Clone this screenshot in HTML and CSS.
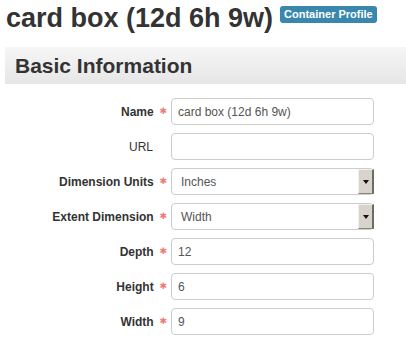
FILE: index.html
```html
<!DOCTYPE html>
<html lang="en">
  <head>
    <meta charset="UTF-8" />
    <meta name="viewport" content="width=device-width, initial-scale=1.0" />
    <title>card box (12d 6h 9w)</title>
    <link rel="stylesheet" href="styles.css">
  </head>
  <body>
    <div class="title-row">
      <h1 class="title">card box (12d 6h 9w)</h1>
      <span class="badge">Container Profile</span>
    </div>
    <div class="section-head">Basic Information</div>
    <form class="fields">
      <label class="field-label required">Name <span class="star">✱</span></label>
      <input class="text-input" type="text" value="card box (12d 6h 9w)" />

      <label class="field-label">URL</label>
      <input class="text-input" type="text" value="" />

      <label class="field-label required">Dimension Units <span class="star">✱</span></label>
      <div class="select-box">
        <span class="select-value">Inches</span>
        <span class="select-arrow"><span class="caret"></span></span>
      </div>

      <label class="field-label required">Extent Dimension <span class="star">✱</span></label>
      <div class="select-box">
        <span class="select-value">Width</span>
        <span class="select-arrow"><span class="caret"></span></span>
      </div>

      <label class="field-label required">Depth <span class="star">✱</span></label>
      <input class="text-input" type="text" value="12" />

      <label class="field-label required">Height <span class="star">✱</span></label>
      <input class="text-input" type="text" value="6" />

      <label class="field-label required">Width <span class="star">✱</span></label>
      <input class="text-input" type="text" value="9" />
    </form>
  </body>
</html>
```

FILE: styles.css
```css
body {
  margin: 0;
  background: #fff;
  color: #333;
  font-family: "Liberation Sans", Arial, sans-serif;
  overflow: hidden;
}

.title-row {
  display: flex;
  align-items: center;
  gap: 7px;
  padding: 3px 0 0 6px;
}

.title {
  margin: 0;
  font-size: 27px;
  line-height: 30px;
  font-weight: bold;
  color: #333;
}

.badge {
  background: #3a87ad;
  color: #fff;
  font-size: 11px;
  font-weight: bold;
  line-height: 13px;
  padding: 2px 4px;
  border-radius: 3px;
  margin-top: -8px;
  white-space: nowrap;
}

.section-head {
  margin: 14px 0 0 5px;
  height: 37px;
  line-height: 37px;
  padding-left: 10px;
  font-size: 21px;
  font-weight: bold;
  background: linear-gradient(#f6f6f6, #e6e6e6);
  color: #333;
}

.fields {
  display: grid;
  grid-template-columns: 167px 203px;
  column-gap: 4px;
  row-gap: 8px;
  margin-top: 14px;
  align-items: center;
}

.field-label {
  text-align: right;
  font-size: 12px;
  color: #333;
  padding-right: 14px;
  white-space: nowrap;
}

.field-label.required {
  font-weight: bold;
  padding-right: 0;
}

.star {
  display: inline-block;
  width: 9px;
  margin-left: 1px;
  text-align: right;
  color: #f07a7a;
  font-family: "DejaVu Sans", sans-serif;
  font-size: 9px;
  font-weight: normal;
  vertical-align: 2px;
}

.text-input {
  box-sizing: border-box;
  height: 27px;
  width: 203px;
  margin: 0;
  padding: 0 6px;
  border: 1px solid #ccc;
  border-radius: 4px;
  font-family: "Liberation Sans", Arial, sans-serif;
  font-size: 12px;
  color: #555;
  background: #fff;
}

.select-box {
  box-sizing: border-box;
  height: 27px;
  width: 203px;
  display: flex;
  align-items: stretch;
  border: 1px solid #ccc;
  border-radius: 4px;
  background: #fff;
  font-size: 12px;
  color: #555;
}

.select-value {
  flex: 1;
  display: flex;
  align-items: center;
  padding-left: 9px;
}

.select-arrow {
  width: 13px;
  display: flex;
  align-items: center;
  justify-content: center;
  background: #d8d4cc;
  border-left: 1px solid #f2f0ec;
  border-top: 1px solid #f2f0ec;
  border-right: 2px solid #6e6a64;
  border-bottom: 1px solid #8a867e;
  margin-right: -1px;
}

.caret {
  width: 0;
  height: 0;
  border-left: 3px solid transparent;
  border-right: 3px solid transparent;
  border-top: 4px solid #111;
}
```
